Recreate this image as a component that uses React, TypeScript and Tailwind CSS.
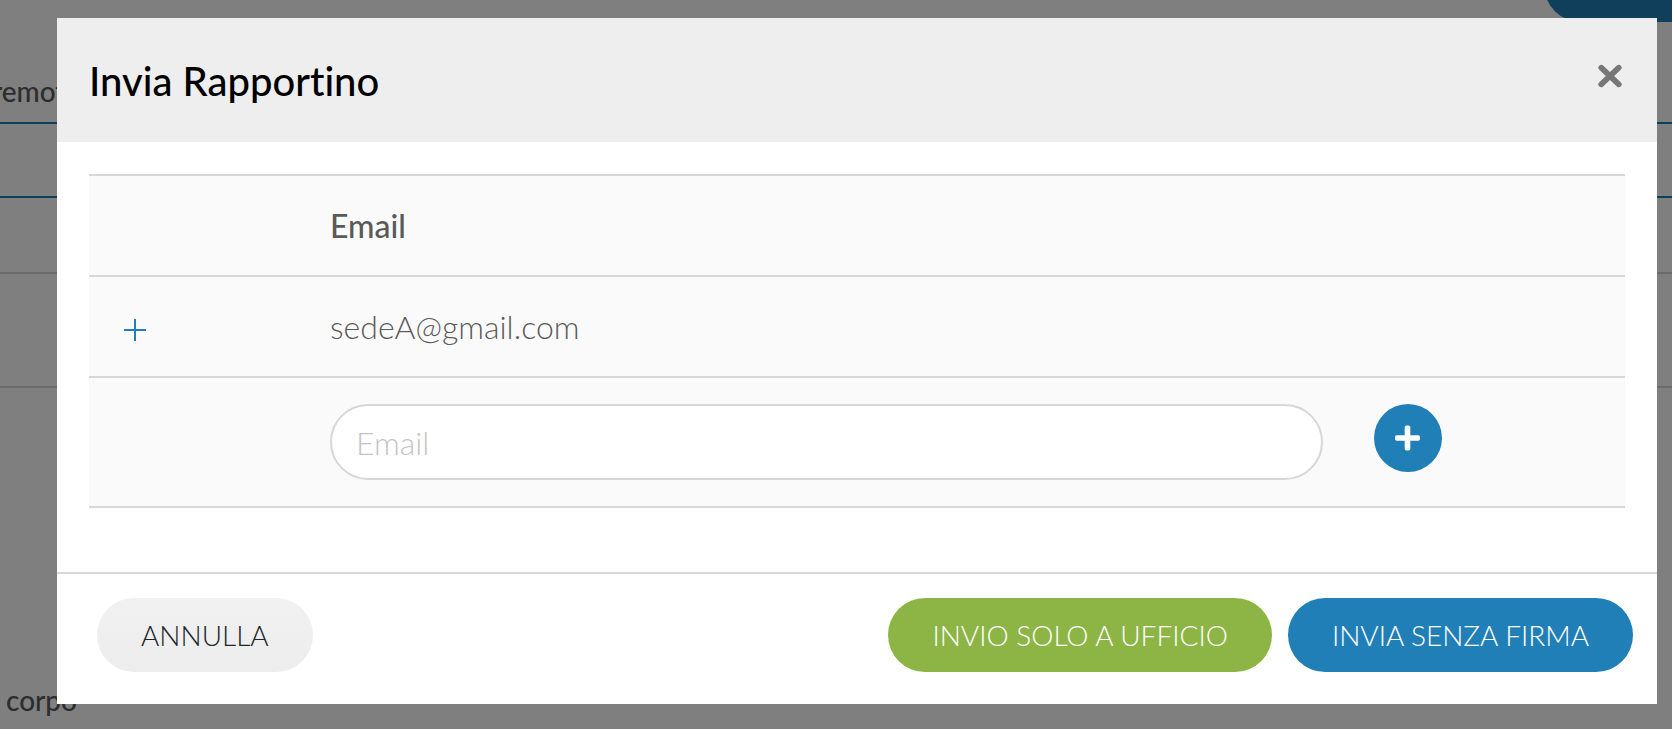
import { useState } from "react";

interface PillButtonProps {
  label: string;
  className: string;
}

function PillButton({ label, className }: PillButtonProps) {
  return (
    <button
      type="button"
      className={`h-[74px] rounded-full px-11 text-[28px] font-light uppercase whitespace-nowrap ${className}`}
    >
      {label}
    </button>
  );
}

function CloseIcon() {
  return (
    <svg width="24" height="24" viewBox="0 0 24 24" fill="none" aria-hidden="true">
      <path
        d="M3.2 3.6 20.8 20.4M20.8 3.6 3.2 20.4"
        stroke="#777777"
        strokeWidth="5.6"
        strokeLinecap="round"
      />
    </svg>
  );
}

function ThinPlusIcon() {
  return (
    <svg width="22" height="22" viewBox="0 0 22 22" aria-hidden="true">
      <path d="M11 0V22M0 11H22" stroke="#217fb7" strokeWidth="2" />
    </svg>
  );
}

function BoldPlusIcon() {
  return (
    <svg width="26" height="26" viewBox="0 0 26 26" fill="#ffffff" aria-hidden="true">
      <rect x="0" y="10.2" width="25" height="5.6" rx="1.8" />
      <rect x="9.7" y="0.5" width="5.6" height="25" rx="1.8" />
    </svg>
  );
}

// Page behind the dialog, scrolled part of the way down
function BackgroundPage() {
  return (
    <div className="flex h-screen flex-col overflow-hidden bg-white text-[28px] font-medium text-[#5a5a5a]">
      <div className="flex h-[22px] shrink-0 items-end justify-end">
        <div className="-mr-[72px] h-[74px] w-[200px] shrink-0 rounded-full bg-[#217fb7]" />
      </div>
      <div className="flex h-[100px] shrink-0 items-end pb-2.5">
        <span className="-ml-2">remot</span>
      </div>
      <div className="h-[76px] shrink-0 border-y-2 border-[#217fb7]" />
      <div className="h-[76px] shrink-0 border-b-2 border-[#d7d7d7]" />
      <div className="h-[114px] shrink-0 border-b-2 border-[#d7d7d7]" />
      <div className="flex grow items-end px-1.5 pb-2">
        <span>corpo</span>
      </div>
    </div>
  );
}

export default function App() {
  const [email, setEmail] = useState("");

  return (
    <div className="relative min-h-screen font-['Lato',sans-serif] [font-variant-ligatures:none]">
      <BackgroundPage />

      <div className="absolute inset-0 bg-black/50 pt-[18px] pr-[15px] pl-[57px]">
        <div role="dialog" aria-labelledby="dialog-title" className="bg-white">
          <header className="flex h-[124px] items-center justify-between bg-[#eeeeee] pt-0.5 pr-[35px] pl-8">
            <h1 id="dialog-title" className="text-[40px] font-medium text-black">
              Invia Rapportino
            </h1>
            <button type="button" aria-label="Chiudi" className="mb-2.5">
              <CloseIcon />
            </button>
          </header>

          <div className="px-8 pt-8 pb-16">
            <table className="w-full table-fixed border-separate border-spacing-0 bg-[#fafafa] text-left text-[32px] text-[#5a5a5a] [&_td]:border-t-2 [&_td]:border-[#d7d7d7] [&_th]:border-t-2 [&_th]:border-[#d7d7d7]">
              <thead>
                <tr className="h-[101px]">
                  <th className="w-[209px]" />
                  <th className="px-8 font-medium">Email</th>
                  <th className="w-[270px]" />
                </tr>
              </thead>
              <tbody>
                <tr className="h-[101px]">
                  <td className="px-[35px]">
                    <button type="button" aria-label="Aggiungi" className="block pt-1.5">
                      <ThinPlusIcon />
                    </button>
                  </td>
                  <td className="px-8 font-light">sedeA@gmail.com</td>
                  <td />
                </tr>
                <tr className="[&>td]:border-b-2">
                  <td />
                  <td className="px-8 py-[26px]">
                    <input
                      type="email"
                      aria-label="Email"
                      placeholder="Email"
                      value={email}
                      onChange={(e) => setEmail(e.target.value)}
                      className="block h-[76px] w-full rounded-full border-2 border-[#d7d7d7] bg-white px-6 font-light outline-none placeholder:text-[#c4c4c4]"
                    />
                  </td>
                  <td className="py-[26px] pl-[19px] align-top">
                    <button
                      type="button"
                      aria-label="Aggiungi email"
                      className="flex size-[68px] items-center justify-center rounded-full bg-[#217fb7]"
                    >
                      <BoldPlusIcon />
                    </button>
                  </td>
                </tr>
              </tbody>
            </table>
          </div>

          <footer className="flex items-center gap-4 border-t-2 border-[#d7d7d7] pt-6 pr-6 pb-8 pl-10">
            <PillButton
              label="Annulla"
              className="mr-auto bg-linear-to-b from-[#f1f1f1] to-[#ededed] text-[#212529]"
            />
            <PillButton label="Invio solo a ufficio" className="bg-[#8cb545] text-white" />
            <PillButton label="Invia senza firma" className="bg-[#217fb7] text-white" />
          </footer>
        </div>
      </div>
    </div>
  );
}
